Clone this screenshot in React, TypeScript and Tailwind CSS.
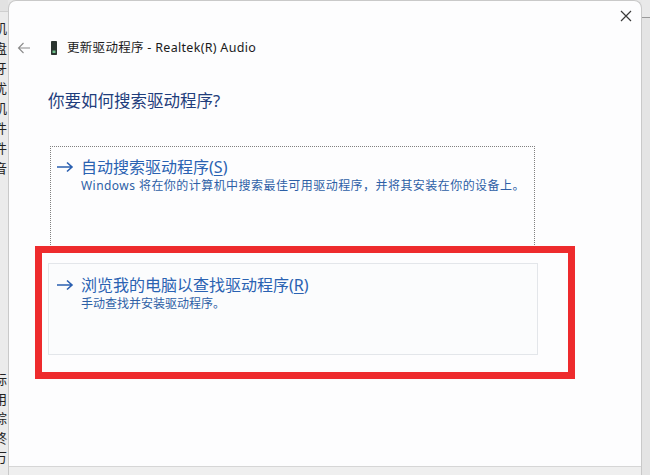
import type { ReactNode } from "react";

const font = { fontFamily: '"Noto Sans", "Noto Sans CJK SC", sans-serif' };

const topChars = ["机", "盘", "牙", "优", "机", "件", "件", "音"];
const bottomChars = ["标", "用", "综", "终", "万"];

function ArrowRight() {
  return (
    <svg width="18" height="12" viewBox="0 0 18 12" className="shrink-0">
      <path d="M1 6H16M11 1.5L16 6L11 10.5" fill="none" stroke="#2a5fb0" strokeWidth="1.6" />
    </svg>
  );
}

function DriverOption({
  title,
  hotkey,
  note,
  className,
}: {
  title: string;
  hotkey: string;
  note: ReactNode;
  className: string;
}) {
  return (
    <div className={`flex gap-[7px] ${className}`}>
      <div className="pt-[4px]">
        <ArrowRight />
      </div>
      <div className="flex flex-col">
        <span className="text-[16px] leading-[20px] text-[#2a62b2]">
          {title}(<span className="underline underline-offset-2">{hotkey}</span>)
        </span>
        <span className="text-[12px] leading-[18px] text-[#2d5fa6]">{note}</span>
      </div>
    </div>
  );
}

export default function App() {
  return (
    <div className="flex h-[475px] w-[650px] overflow-hidden bg-[#e8e8e8]" style={font}>
      {/* window behind, cut off at the left edge */}
      <div className="flex w-[8px] shrink-0 flex-col overflow-hidden bg-[#ebebeb]">
        <div className="h-[12px] border-b border-[#cfcfcf] bg-[#e2e2e2]" />
        <div className="mt-[6px] flex flex-col">
          {topChars.map((c, i) => (
            <span key={i} className="-ml-[6px] h-[20px] text-[13px] leading-[20px] text-[#222]">
              {c}
            </span>
          ))}
        </div>
        <div className="mt-[192px] flex flex-col">
          {bottomChars.map((c, i) => (
            <span key={i} className="-ml-[6px] h-[19.5px] text-[13px] leading-[19.5px] text-[#222]">
              {c}
            </span>
          ))}
        </div>
      </div>

      {/* dialog */}
      <div className="flex w-[634px] shrink-0 flex-col overflow-hidden rounded-t-[8px] border-x border-t border-[#c9c9c9] bg-[#fdfdfe]">
        <div className="relative flex-1">
          <div className="flex justify-end pr-[9px] pt-[9px]">
            <svg width="12" height="12" viewBox="0 0 12 12">
              <path d="M1 1L11 11M11 1L1 11" stroke="#3a3a3a" strokeWidth="1.2" />
            </svg>
          </div>

          <div className="mt-[18px] flex items-center">
            <svg width="14" height="12" viewBox="0 0 14 12" className="ml-[8px]">
              <path d="M13 6H1.5M6.5 1L1.5 6L6.5 11" fill="none" stroke="#8a8a8a" strokeWidth="1.1" />
            </svg>
            <svg width="6" height="14" viewBox="0 0 6 14" className="ml-[20px]">
              <rect x="0" y="0" width="6" height="14" rx="0.8" fill="#2b3530" />
              <rect x="1.5" y="9.5" width="3" height="2.5" fill="#6fbf8a" />
            </svg>
            <span className="ml-[10px] text-[12.5px] leading-[16px] tracking-[0.3px] text-[#1b1b1b]">
              更新驱动程序 - Realtek(R) Audio
            </span>
          </div>

          <div className="ml-[39px] mt-[34px] text-[16.5px] leading-[22px] text-[#1f3d7c]">
            你要如何搜索驱动程序?
          </div>

          <DriverOption
            className="ml-[41px] mt-[34px] h-[103px] w-[485px] border border-dotted border-[#808080] px-[5px] pt-[10px]"
            title="自动搜索驱动程序"
            hotkey="S"
            note={
              <span className="tracking-[0.45px]">
                Windows 将在你的计算机中搜索最佳可用驱动程序，并将其安装在你的设备上。
              </span>
            }
          />

          <DriverOption
            className="ml-[39px] mt-[14px] h-[92px] w-[490px] border border-[#e3e6ea] bg-[#fbfcfd] px-[7px] pt-[11px]"
            title="浏览我的电脑以查找驱动程序"
            hotkey="R"
            note="手动查找并安装驱动程序。"
          />

          {/* red annotation frame */}
          <div className="pointer-events-none absolute left-[26px] top-[245px] h-[133px] w-[540px] border-[7px] border-[#ee2b2d]" />
        </div>
        <div className="h-[9px] border-t border-[#d6d6d6] bg-[#efefef]" />
      </div>

      {/* window behind, right edge */}
      <div className="flex w-[8px] shrink-0 flex-col bg-[#e4e4e4]">
        <div className="h-[18px] border-b border-[#9a9a9a] bg-[#e9e9e9]" />
      </div>
    </div>
  );
}
